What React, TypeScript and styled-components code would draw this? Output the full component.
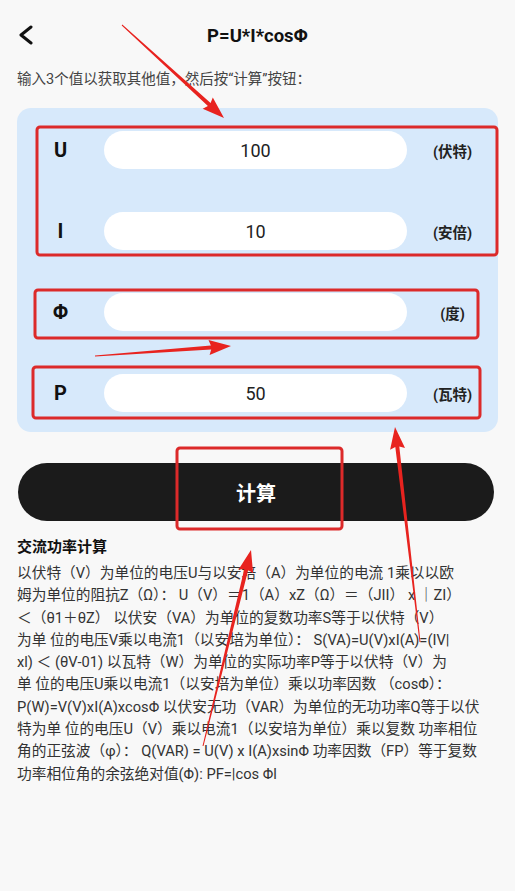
import styled, { createGlobalStyle } from "styled-components";

const GlobalStyle = createGlobalStyle`
  html, body {
    margin: 0;
    padding: 0;
    background: #f8f8f8;
  }
`;

const Page = styled.div`
  position: relative;
  width: 515px;
  min-height: 891px;
  box-sizing: border-box;
  padding: 0 17px;
  background: #f8f8f8;
  font-family: Roboto, "Noto Sans CJK SC", sans-serif;
  color: #222;
  overflow: hidden;
`;

const Header = styled.div`
  height: 70px;
  display: grid;
  grid-template-columns: 1fr auto 1fr;
  align-items: center;
`;

const BackButton = styled.div`
  width: 16px;
  height: 20px;
  margin-left: 1px;
  display: flex;
  align-items: center;
`;

const Title = styled.h1`
  margin: 0;
  font-size: 18.5px;
  font-weight: 700;
  color: #111;
  padding-top: 2px;
`;

const Hint = styled.p`
  margin: 0;
  font-size: 14.5px;
  line-height: 20px;
  color: #444;
`;

const Panel = styled.div`
  margin-top: 18px;
  padding: 23px 0 20px;
  border-radius: 14px;
  background: #d7e9fb;
  display: flex;
  flex-direction: column;
  gap: 43px;
`;

const Row = styled.div`
  display: grid;
  grid-template-columns: 87px 303px 1fr;
  align-items: center;
  height: 38px;
`;

const Label = styled.span`
  text-align: center;
  font-size: 20px;
  font-weight: 700;
  color: #111;
`;

const ValueInput = styled.input`
  height: 38px;
  width: 100%;
  box-sizing: border-box;
  border: none;
  outline: none;
  border-radius: 19px;
  background: #fff;
  text-align: center;
  font-family: Roboto, "Noto Sans CJK SC", sans-serif;
  font-size: 18px;
  color: #222;
  padding: 0;
`;

const Unit = styled.span`
  text-align: center;
  font-size: 14.5px;
  font-weight: 700;
  color: #222;
`;

const CalcButton = styled.button`
  display: block;
  width: 476px;
  height: 58px;
  margin: 31px 0 0 1px;
  border: none;
  border-radius: 29px;
  background: #1b1b1b;
  color: #fff;
  font-family: Roboto, "Noto Sans CJK SC", sans-serif;
  font-size: 20px;
  font-weight: 700;
`;

const SectionTitle = styled.h2`
  margin: 15px 0 4px;
  font-size: 15px;
  line-height: 22px;
  font-weight: 700;
  color: #111;
`;

const Body = styled.div`
  font-size: 14.7px;
  line-height: 22.3px;
  color: #333;
`;

const Line = styled.div`
  white-space: nowrap;
`;

const Overlay = styled.svg`
  position: absolute;
  left: 0;
  top: 0;
  pointer-events: none;
`;

const RED = "#dc2a2a";

const fields = [
  { label: "U", value: "100", unit: "(伏特)" },
  { label: "I", value: "10", unit: "(安倍)" },
  { label: "Φ", value: "", unit: "(度)" },
  { label: "P", value: "50", unit: "(瓦特)" },
];

const lines = [
  "以伏特（V）为单位的电压U与以安培（A）为单位的电流 1乘以以欧",
  "姆为单位的阻抗Z（Ω）： U（V）＝1（A）xZ（Ω）＝（JII） x ｜ZI）",
  "＜（θ1＋θZ） 以伏安（VA）为单位的复数功率S等于以伏特（V）",
  "为单 位的电压V乘以电流1（以安培为单位）： S(VA)=U(V)xI(A)=(IV|",
  "xl) ＜ (θV-01) 以瓦特（W）为单位的实际功率P等于以伏特（V）为",
  "单 位的电压U乘以电流1（以安培为单位）乘以功率因数 （cosΦ）：",
  "P(W)=V(V)xI(A)xcosΦ 以伏安无功（VAR）为单位的无功功率Q等于以伏",
  "特为单 位的电压U（V）乘以电流1（以安培为单位）乘以复数 功率相位",
  "角的正弦波（φ）： Q(VAR) = U(V) x I(A)xsinΦ 功率因数（FP）等于复数",
  "功率相位角的余弦绝对值(Φ): PF=|cos Φl",
];

const boxes = [
  { x: 37, y: 127, w: 460, h: 128 },
  { x: 35, y: 290, w: 443, h: 48 },
  { x: 33, y: 367, w: 447, h: 51 },
  { x: 177, y: 448, w: 165, h: 81 },
];

const arrows = [
  { x1: 122, y1: 25, x2: 224, y2: 118 },
  { x1: 95, y1: 356, x2: 231, y2: 346 },
  { x1: 420, y1: 642, x2: 395, y2: 427 },
  { x1: 203, y1: 746, x2: 251, y2: 550 },
];

function arrowPoints(x1: number, y1: number, x2: number, y2: number) {
  const len = Math.hypot(x2 - x1, y2 - y1);
  const ux = (x2 - x1) / len;
  const uy = (y2 - y1) / len;
  const nx = -uy;
  const ny = ux;
  const head = 20;
  const bx = x2 - ux * head;
  const by = y2 - uy * head;
  const pts: [number, number][] = [
    [x1 + nx * 0.5, y1 + ny * 0.5],
    [bx + nx * 2, by + ny * 2],
    [bx - ux * 2 + nx * 7.5, by - uy * 2 + ny * 7.5],
    [x2, y2],
    [bx - ux * 2 - nx * 7.5, by - uy * 2 - ny * 7.5],
    [bx - nx * 2, by - ny * 2],
    [x1 - nx * 0.5, y1 - ny * 0.5],
  ];
  return pts.map((p) => p.map((v) => v.toFixed(1)).join(",")).join(" ");
}

function Annotations() {
  return (
    <Overlay width={515} height={891} viewBox="0 0 515 891">
      {boxes.map((b, i) => (
        <rect
          key={i}
          x={b.x}
          y={b.y}
          width={b.w}
          height={b.h}
          rx={3}
          fill="none"
          stroke={RED}
          strokeWidth={3}
        />
      ))}
      {arrows.map((a, i) => (
        <polygon key={i} points={arrowPoints(a.x1, a.y1, a.x2, a.y2)} fill="#e8231f" />
      ))}
    </Overlay>
  );
}

export default function App() {
  return (
    <>
      <GlobalStyle />
      <Page>
        <Header>
          <BackButton>
            <svg width="16" height="20" viewBox="0 0 16 20">
              <polyline
                points="13,2 3,10 13,18"
                fill="none"
                stroke="#111"
                strokeWidth="3"
                strokeLinecap="round"
                strokeLinejoin="round"
              />
            </svg>
          </BackButton>
          <Title>P=U*I*cosΦ</Title>
          <span />
        </Header>
        <Hint>输入3个值以获取其他值，然后按“计算”按钮：</Hint>
        <Panel>
          {fields.map((f) => (
            <Row key={f.label}>
              <Label>{f.label}</Label>
              <ValueInput defaultValue={f.value} readOnly />
              <Unit>{f.unit}</Unit>
            </Row>
          ))}
        </Panel>
        <CalcButton>计算</CalcButton>
        <SectionTitle>交流功率计算</SectionTitle>
        <Body>
          {lines.map((l, i) => (
            <Line key={i}>{l}</Line>
          ))}
        </Body>
        <Annotations />
      </Page>
    </>
  );
}
